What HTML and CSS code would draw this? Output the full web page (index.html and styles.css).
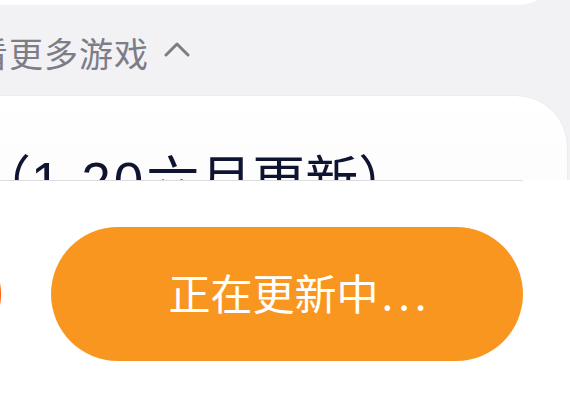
FILE: index.html
```html
<!DOCTYPE html>
<html lang="zh-CN">
<head>
  <meta charset="UTF-8">
  <meta name="viewport" content="width=device-width, initial-scale=1.0">
  <title>游戏更新</title>
  <link rel="stylesheet" href="styles.css">
</head>
<body>
  <div class="page">
    <div class="scroll">
      <div class="top-card"></div>

      <div class="more">
        <span class="more-text">看更多游戏</span>
        <svg class="caret" width="26" height="16" viewBox="0 0 26 16">
          <polyline points="2,14 13,3 24,14" fill="none" stroke="#7d7d88" stroke-width="3" stroke-linecap="round" stroke-linejoin="round"/>
        </svg>
      </div>

      <div class="game-card">
        <p class="game-title">（<span class="ver">1.20</span>六月更新）</p>
      </div>
    </div>

    <div class="action-bar">
      <div class="divider"></div>
      <div class="action-row">
        <div class="round-btn"></div>
        <button class="update-btn">正在更新中<span class="dots">...</span></button>
      </div>
    </div>
  </div>
</body>
</html>
```
FILE: styles.css
```css
body { margin: 0; background: #f2f2f5; font-family: "Liberation Sans", "Noto Sans CJK SC", sans-serif; overflow: hidden; }
.page { width: 570px; height: 407px; overflow: hidden; }
.scroll { height: 180px; overflow: hidden; }
.top-card { height: 60px; margin: -55px 4px 0 -40px; background: #fff; border-radius: 0 0 50px 0; }
.more { height: 86px; padding-top: 4px; margin-left: -26px; display: flex; align-items: center; gap: 15px; color: #7d7d88; font-size: 34px; }
.more-text { letter-spacing: 1px; }
.caret { margin-top: -6px; }
.game-card { height: 200px; margin: 0 2px 0 -40px; background: linear-gradient(#fff, #f9f9fa); border: 1px solid #ececef; border-radius: 0 52px 0 0; }
.game-title { margin: 0; padding: 54px 0 0 17px; font-size: 53px; line-height: 1.2; color: #0f1430; white-space: nowrap; }
.ver { letter-spacing: 3px; }
.action-bar { height: 227px; background: #fff; }
.divider { width: 523px; height: 1px; background: #dcdce1; }
.action-row { display: flex; align-items: center; gap: 50px; padding-top: 46px; margin-left: -133px; }
.round-btn { flex: none; width: 134px; height: 134px; border-radius: 50%; background: linear-gradient(90deg, #ff7a1a, #ff5c00); }
.update-btn { flex: none; width: 472px; height: 134px; border: none; border-radius: 67px; background: #f99620; color: #fff; font-family: "Noto Sans CJK SC", sans-serif; font-size: 42px; padding: 0 0 6px 26px; }
.dots { letter-spacing: 5px; margin-left: 3px; }
```
